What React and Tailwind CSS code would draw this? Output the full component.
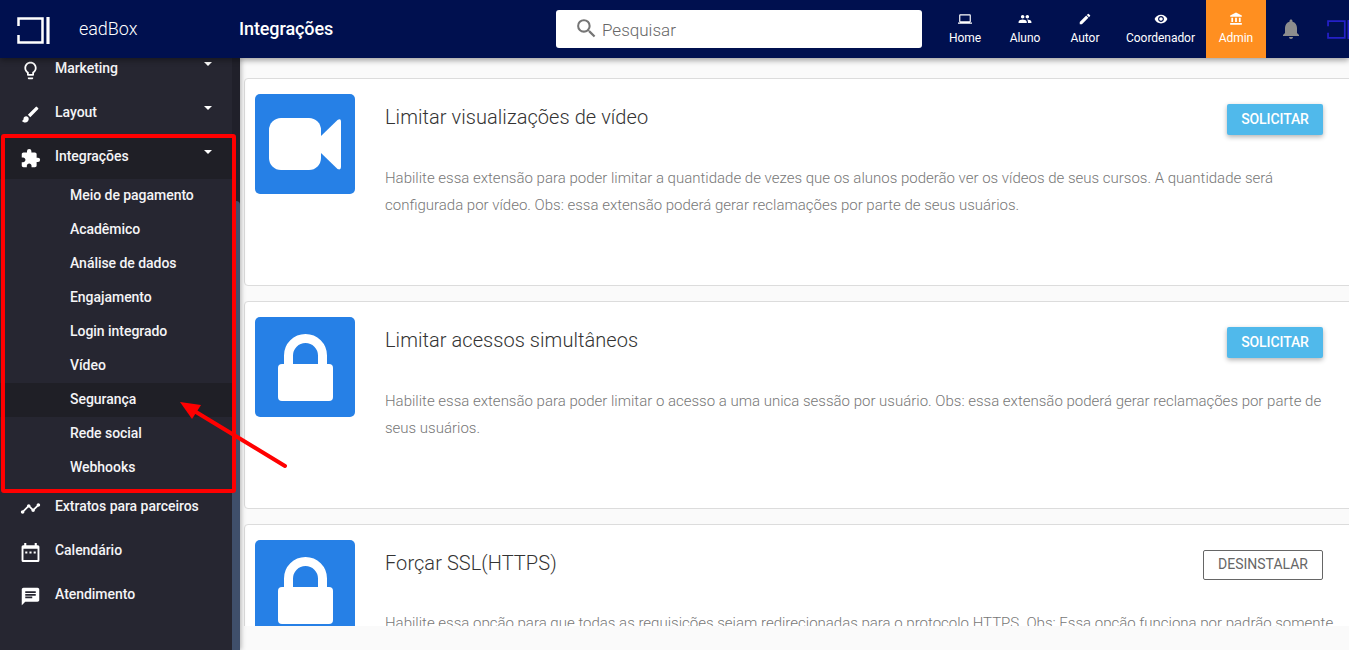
import React from 'react';
import {
    MdLaptop,
    MdPeople,
    MdEdit,
    MdVisibility,
    MdAccountBalance,
    MdNotifications,
    MdLightbulbOutline,
    MdBrush,
    MdExtension,
    MdTimeline,
    MdChat,
    MdSearch,
} from 'react-icons/md';

const Logo = ({ className }) => (
    <svg className={className} viewBox="0 0 33 27" fill="none" stroke="currentColor" strokeWidth="2.5">
        <path d="M1.500 9V1.500H25.500V25.500H1.500V18" />
        <path d="M31 0V27" strokeWidth="3.200" />
    </svg>
);

const CalendarIcon = ({ size }) => (
    <svg width={size} height={size} viewBox="0 0 20 20" fill="currentColor">
        <path
            fillRule="evenodd"
            d="M4 1h2v2h8V1h2v2h1a1.500 1.500 0 0 1 1.500 1.500v13A1.500 1.500 0 0 1 17 19H3a1.500 1.500 0 0 1-1.500-1.500v-13A1.500 1.500 0 0 1 3 3h1zM3.300 6.500v10.700h13.400V6.500z"
        />
        <path d="M5 9h2v2H5zM9 9h2v2H9zM13 9h2v2h-2z" />
    </svg>
);

const VideoArt = () => (
    <svg width="100" height="100" viewBox="0 0 100 100" fill="#fff">
        <rect x="14" y="24" width="52" height="52" rx="12" />
        <path d="M65 43L82.500 26Q86 24 86 27.500V73Q86 76.500 82.500 75L65 58z" />
    </svg>
);

const LockArt = () => (
    <svg width="100" height="100" viewBox="0 0 100 100" fill="#fff">
        <rect x="23" y="47" width="55" height="37" rx="4" />
        <path d="M33.500 50V38.500a17 17 0 0 1 34 0V50" fill="none" stroke="#fff" strokeWidth="9" />
    </svg>
);

const topLinks = [
    { name: 'Home', icon: MdLaptop, width: 'w-[60px]' },
    { name: 'Aluno', icon: MdPeople, width: 'w-[60px]' },
    { name: 'Autor', icon: MdEdit, width: 'w-[60px]' },
    { name: 'Coordenador', icon: MdVisibility, width: 'w-[91px]' },
    { name: 'Admin', icon: MdAccountBalance, width: 'w-[60px]', active: true },
];

const menu = [
    { name: 'Marketing', icon: MdLightbulbOutline, caret: true },
    { name: 'Layout', icon: MdBrush, caret: true },
    {
        name: 'Integrações',
        icon: MdExtension,
        caret: true,
        active: true,
        children: [
            'Meio de pagamento',
            'Acadêmico',
            'Análise de dados',
            'Engajamento',
            'Login integrado',
            'Vídeo',
            'Segurança',
            'Rede social',
            'Webhooks',
        ],
    },
    { name: 'Extratos para parceiros', icon: MdTimeline },
    { name: 'Calendário', icon: CalendarIcon },
    { name: 'Atendimento', icon: MdChat },
];

const extensions = [
    {
        title: 'Limitar visualizações de vídeo',
        art: VideoArt,
        lines: [
            'Habilite essa extensão para poder limitar a quantidade de vezes que os alunos poderão ver os vídeos de seus cursos. A quantidade será',
            'configurada por vídeo. Obs: essa extensão poderá gerar reclamações por parte de seus usuários.',
        ],
    },
    {
        title: 'Limitar acessos simultâneos',
        art: LockArt,
        lines: [
            'Habilite essa extensão para poder limitar o acesso a uma unica sessão por usuário. Obs: essa extensão poderá gerar reclamações por parte de',
            'seus usuários.',
        ],
    },
    {
        title: 'Forçar SSL(HTTPS)',
        art: LockArt,
        installed: true,
        lines: [
            'Habilite essa opção para que todas as requisições sejam redirecionadas para o protocolo HTTPS. Obs: Essa opção funciona por padrão somente',
        ],
    },
];

const Header = () => (
    <header className="relative z-20 flex h-[58px] shrink-0 bg-[#00104f] text-white shadow-[0_2px_6px_rgba(0,0,0,0.4)]">
        <div className="flex w-[239px] shrink-0 items-center pl-[17px]">
            <Logo className="mt-[3px] h-[27px] w-[33px]" />
            <span className="-mt-px ml-[29px] text-[18px] font-light tracking-[-0.05px]">eadBox</span>
        </div>
        <h1 className="-mt-px flex w-[317px] shrink-0 items-center text-[18px] font-medium tracking-[-0.1px]">Integrações</h1>
        <div className="mt-[10px] flex h-[38px] w-[366px] shrink-0 items-center rounded-[3px] bg-white pl-[18px] text-[#757575]">
            <MdSearch size={25} className="-mt-[2px]" />
            <span className="ml-[3px] mt-[3px] text-[17px] font-light text-[#666]">Pesquisar</span>
        </div>
        <nav className="ml-[13px] flex shrink-0">
            {topLinks.map(({ name, icon: Icon, width, active }) => (
                <a
                    key={name}
                    className={`flex flex-col items-center pt-[12px] ${width} ${active ? 'bg-[#ff8f20]' : ''}`}
                >
                    <Icon size={14} />
                    <span className="mt-[3px] text-[12px] leading-[18px] tracking-[-0.05px]">{name}</span>
                </a>
            ))}
        </nav>
        <div className="flex min-w-0 flex-1 items-center overflow-hidden">
            <MdNotifications size={24} className="ml-[13px] shrink-0 text-[#8d8d8d]" />
            <Logo className="ml-[24px] mt-px h-[19px] w-[23px] shrink-0 text-[#2420c8]" />
        </div>
    </header>
);

const Sidebar = () => (
    <aside className="relative z-10 flex w-[240px] shrink-0 bg-[#262631] text-[#f4f4f6] shadow-[1px_0_5px_rgba(0,0,0,0.3)]">
        <div className="-mt-[11px] w-[232px] text-[14px] font-medium tracking-[-0.04px]">
            {menu.map(({ name, icon: Icon, caret, active, children }) => (
                <div key={name}>
                    <div className={`flex h-[44px] items-center pl-[20px] ${active ? 'bg-[#1f1f26]' : ''}`}>
                        <span className="mt-[2px] flex w-[35px] text-white">
                            <Icon size={21} />
                        </span>
                        <span className="-mt-[2px] flex-1">{name}</span>
                        {caret && (
                            <span className="-mt-[10px] mr-[20px] border-x-4 border-t-4 border-x-transparent border-t-white" />
                        )}
                    </div>
                    {children?.map((child) => (
                        <div
                            key={child}
                            className={`flex h-[34px] items-center pb-[2px] pl-[70px] ${child === 'Segurança' ? 'bg-[#1f1f26]' : ''}`}
                        >
                            {child}
                        </div>
                    ))}
                </div>
            ))}
        </div>
        {/* Scrollbar */}
        <div className="w-2 bg-[#20202a] pt-[143px]">
            <div className="h-full rounded-t bg-[#3f4f6b]" />
        </div>
    </aside>
);

const ExtensionCard = ({ title, art: Art, lines, installed }) => (
    <article className="flex h-[208px] w-[1120px] shrink-0 rounded-[4px] border border-[#dcdcdc] bg-white pl-[10px] pt-[15px]">
        <div className="h-[100px] w-[100px] shrink-0 overflow-hidden rounded-[5px] bg-[#2680e6]">
            <Art />
        </div>
        <div className="ml-[30px] w-[938px]">
            <div className="flex h-[41px] items-start justify-between">
                <h2 className="mt-[8px] text-[20px] font-light leading-[30px] tracking-[0.06px] text-[#333]">{title}</h2>
                {installed ? (
                    <button className="mt-[10px] h-[30px] w-[120px] rounded-[2px] border border-[#666] pb-px text-[14px] text-[#666]">
                        DESINSTALAR
                    </button>
                ) : (
                    <button className="mt-[10px] h-[31px] w-[96px] rounded-[2px] bg-[#50b9eb] text-[14px] font-medium tracking-[-0.1px] text-white shadow-[0_2px_5px_rgba(0,0,0,0.3)]">
                        SOLICITAR
                    </button>
                )}
            </div>
            <p className={`whitespace-nowrap text-[15px] font-light leading-[27px] text-[#777] ${installed ? 'mt-[29px]' : 'mt-[30px]'}`}>
                {lines.map((line) => (
                    <span key={line} className="block">{line}</span>
                ))}
            </p>
        </div>
    </article>
);

// Red frame and pointer laid over the "Integrações" menu
const Highlight = () => (
    <svg className="pointer-events-none absolute left-0 top-0 z-30" width="300" height="500" viewBox="0 0 300 500">
        <rect x="3" y="136" width="231" height="355" rx="1" fill="none" stroke="#f00" strokeWidth="4" />
        <path d="M285 466L196 412" stroke="#f00" strokeWidth="4" strokeLinecap="round" />
        <path d="M180 402L201 405L192 419z" fill="#f00" />
    </svg>
);

const App = () => {
    return (
        <div className="relative flex h-[650px] w-[1349px] flex-col overflow-hidden bg-[#fafafa] font-['Roboto',sans-serif]">
            <Header />
            <div className="flex min-h-0 flex-1">
                <Sidebar />
                <main className="flex h-[568px] min-w-0 flex-1 flex-col gap-[15px] overflow-hidden pl-[4px] pt-[20px]">
                    {extensions.map((extension) => (
                        <ExtensionCard key={extension.title} {...extension} />
                    ))}
                </main>
            </div>
            <Highlight />
        </div>
    );
};

export default App;
